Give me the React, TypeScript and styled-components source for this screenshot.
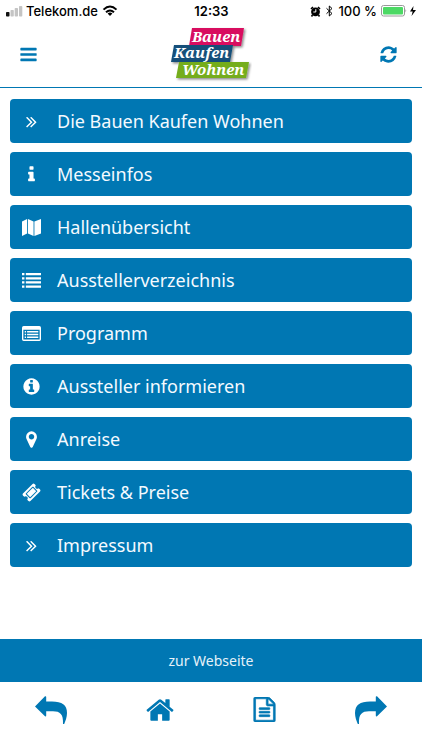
import React from "react";
import styled, { createGlobalStyle } from "styled-components";

const BLUE = "#0077b3";

const GlobalStyle = createGlobalStyle`
  *, *::before, *::after { box-sizing: border-box; }
  body { margin: 0; background: #fff; font-family: "Noto Sans", "Open Sans", sans-serif; }
`;

const Page = styled.div`
  display: flex;
  flex-direction: column;
  min-height: 100vh;
`;

const StatusBar = styled.div`
  display: grid;
  grid-template-columns: 1fr auto 1fr;
  align-items: center;
  height: 22px;
  padding: 0 5px 0 6px;
  font: 500 13px/20px Inter, sans-serif;
  color: #000;
`;

const StatusGroup = styled.div<{ $end?: boolean }>`
  display: flex;
  align-items: center;
  justify-content: ${(p) => (p.$end ? "flex-end" : "flex-start")};
  gap: ${(p) => (p.$end ? "4px" : "3px")};
  white-space: nowrap;
`;

const Clock = styled.time`
  font-weight: 600;
`;

const Header = styled.header`
  display: grid;
  grid-template-columns: 1fr auto 1fr;
  align-items: center;
  height: 66px;
  padding: 0 16px;
  border-bottom: 1px solid ${BLUE};
`;

const IconButton = styled.button<{ $end?: boolean }>`
  display: flex;
  justify-self: ${(p) => (p.$end ? "end" : "start")};
  padding: ${(p) => (p.$end ? "0 8px" : "0 3px")};
  border: 0;
  background: none;
  color: ${BLUE};
  cursor: pointer;
`;

const Logo = styled.svg`
  display: block;
  font: italic 700 15px "Noto Serif", "Liberation Serif", serif;
`;

const Menu = styled.nav`
  display: flex;
  flex: 1;
  flex-direction: column;
  gap: 9px;
  padding: 11px 10px;
`;

const MenuLink = styled.a`
  display: flex;
  align-items: center;
  gap: 16px;
  height: 44px;
  padding: 0 11px;
  border-radius: 4px;
  background: ${BLUE};
  color: #f4faff;
  font-size: 18px;
  line-height: 24px;
  text-decoration: none;
`;

const MenuIcon = styled.span`
  display: flex;
  justify-content: center;
  width: 20px;
  color: #fff;
`;

const WebsiteLink = styled.a`
  display: flex;
  align-items: center;
  justify-content: center;
  height: 43px;
  background: ${BLUE};
  color: #e6f2f9;
  font-size: 14px;
  line-height: 20px;
  text-decoration: none;
`;

const TabBar = styled.nav`
  display: flex;
  justify-content: space-between;
  height: 68px;
  padding: 0 35px 13px;
`;

const TabButton = styled.button`
  display: flex;
  align-items: center;
  padding: 0;
  border: 0;
  background: none;
  color: ${BLUE};
  cursor: pointer;
`;

const ICONS = {
  bars: "M1664 1344v128q0 26-19 45t-45 19h-1408q-26 0-45-19t-19-45v-128q0-26 19-45t45-19h1408q26 0 45 19t19 45zm0-512v128q0 26-19 45t-45 19h-1408q-26 0-45-19t-19-45v-128q0-26 19-45t45-19h1408q26 0 45 19t19 45zm0-512v128q0 26-19 45t-45 19h-1408q-26 0-45-19t-19-45v-128q0-26 19-45t45-19h1408q26 0 45 19t19 45z",
  refresh:
    "M1639 1056q0 5-1 7-64 268-268 434.5t-478 166.5q-146 0-282.5-55t-243.5-157l-129 129q-19 19-45 19t-45-19-19-45v-448q0-26 19-45t45-19h448q26 0 45 19t19 45-19 45l-137 137q71 66 161 102t187 36q134 0 250-65t186-179q11-17 53-117 8-23 30-23h192q13 0 22.5 9.5t9.5 22.5zm25-800v448q0 26-19 45t-45 19h-448q-26 0-45-19t-19-45 19-45l138-138q-148-137-349-137-134 0-250 65t-186 179q-11 17-53 117-8 23-30 23h-199q-13 0-22.5-9.5t-9.5-22.5v-7q65-268 270-434.5t480-166.5q146 0 284 55.5t245 156.5l130-129q19-19 45-19t45 19 19 45z",
  angles:
    "M979 960q0 13-10 23l-466 466q-10 10-23 10t-23-10l-50-50q-10-10-10-23t10-23l393-393-393-393q-10-10-10-23t10-23l50-50q10-10 23-10t23 10l466 466q10 10 10 23zm384 0q0 13-10 23l-466 466q-10 10-23 10t-23-10l-50-50q-10-10-10-23t10-23l393-393-393-393q-10-10-10-23t10-23l50-50q10-10 23-10t23 10l466 466q10 10 10 23z",
  info: "M1216 1344v128q0 26-19 45t-45 19h-512q-26 0-45-19t-19-45v-128q0-26 19-45t45-19h64v-384h-64q-26 0-45-19t-19-45v-128q0-26 19-45t45-19h384q26 0 45 19t19 45v576h64q26 0 45 19t19 45zm-128-1152v192q0 26-19 45t-45 19h-256q-26 0-45-19t-19-45v-192q0-26 19-45t45-19h256q26 0 45 19t19 45z",
  map: "M0 330L480 90V1460L0 1700ZM560 90L1090 330V1700L560 1460ZM1170 330L1792 90V1460L1170 1700Z",
  list: "M0 190h230v220H0zM360 190h1432v220H360zM0 580h230v220H0zM360 580h1432v220H360zM0 970h230v220H0zM360 970h1432v220H360zM0 1360h230v220H0zM360 1360h1432v220H360z",
  listAlt:
    "M160 192H1632Q1792 192 1792 352V1440Q1792 1600 1632 1600H160Q0 1600 0 1440V352Q0 192 160 192ZM128 544V1440Q128 1472 160 1472H1632Q1664 1472 1664 1440V544ZM256 670h128v128H256zM480 670h1056v128H480zM256 926h128v128H256zM480 926h1056v128H480zM256 1182h128v128H256zM480 1182h1056v128H480z",
  infoCircle:
    "M1152 1376v-160q0-14-9-23t-23-9h-96v-512q0-14-9-23t-23-9h-320q-14 0-23 9t-9 23v160q0 14 9 23t23 9h96v320h-96q-14 0-23 9t-9 23v160q0 14 9 23t23 9h448q14 0 23-9t9-23zm-128-896v-160q0-14-9-23t-23-9h-192q-14 0-23 9t-9 23v160q0 14 9 23t23 9h192q14 0 23-9t9-23zm640 416q0 209-103 385.5t-279.5 279.5-385.5 103-385.5-103-279.5-279.5-103-385.5 103-385.5 279.5-279.5 385.5-103 385.5 103 279.5 279.5 103 385.5z",
  marker:
    "M1152 640q0-106-75-181t-181-75-181 75-75 181 75 181 181 75 181-75 75-181zm256 0q0 109-33 179l-364 774q-16 33-47.5 52t-67.5 19-67.5-19-46.5-52l-365-774q-33-70-33-179 0-212 150-362t362-150 362 150 150 362z",
  ticket:
    "M1024 452l316 316-572 572-316-316zm-211 979l618-618q19-19 19-45t-19-45l-362-362q-18-18-45-18t-45 18l-618 618q-19 19-19 45t19 45l362 362q18 18 45 18t45-18zm889-637l-907 908q-37 37-90.500 37t-90.500-37l-126-126q56-56 56-136t-56-136-136-56-136 56l-125-126q-37-37-37-90.500t37-90.500l907-906q37-37 90.500-37t90.500 37l125 125q-56 56-56 136t56 136 136 56 136-56l126 125q37 37 37 90.500t-37 90.500z",
  home: "M1472 992v480q0 26-19 45t-45 19h-384v-384h-256v384h-384q-26 0-45-19t-19-45v-480q0-1 .5-3t.5-3l575-474 575 474q1 2 1 6zm223-69l-62 74q-8 9-21 11h-3q-13 0-21-7l-692-577-692 577q-12 8-24 7-13-2-21-11l-62-74q-8-10-7-23.5t11-21.500l719-599q32-26 76-26t76 26l244 204v-195q0-14 9-23t23-9h192q14 0 23 9t9 23v408l219 182q10 8 11 21.500t-7 23.500z",
  file: "M1596 380q28 28 48 76t20 88v1152q0 40-28 68t-68 28h-1344q-40 0-68-28t-28-68v-1600q0-40 28-68t68-28h896q40 0 88 20t76 48zm-444-244v376h376q-10-29-22-41l-313-313q-12-12-41-22zm384 1528v-1024h-416q-40 0-68-28t-28-68v-416h-768v1536h1280zm-1024-864q0-14 9-23t23-9h704q14 0 23 9t9 23v64q0 14-9 23t-23 9h-704q-14 0-23-9t-9-23v-64zm736 224q14 0 23 9t9 23v64q0 14-9 23t-23 9h-704q-14 0-23-9t-9-23v-64q0-14 9-23t23-9h704zm0 256q14 0 23 9t9 23v64q0 14-9 23t-23 9h-704q-14 0-23-9t-9-23v-64q0-14 9-23t23-9h704z",
};

type IconName = keyof typeof ICONS;

function Icon({ name, size, bold }: { name: IconName; size: number; bold?: boolean }) {
  return (
    <svg width={size} height={size} viewBox="0 0 1792 1792" fill="currentColor" aria-hidden="true">
      <path
        d={ICONS[name]}
        fillRule={name === "listAlt" ? "evenodd" : "nonzero"}
        stroke={bold ? "currentColor" : "none"}
        strokeWidth="50"
      />
    </svg>
  );
}

function CurvedArrow({ forward }: { forward?: boolean }) {
  return (
    <svg width="32" height="28" viewBox="0 0 32 28" fill="currentColor" aria-hidden="true">
      <path
        transform={forward ? "translate(32 0) scale(-1 1)" : undefined}
        d="M0 10.500L10 0.300Q11.200 0 11.200 1V5.500H17C27 5.500 32 9 32 17C32 21 30.500 25 29.200 28H28C28.500 18 25 15.200 18 15.200H11.200V19.500Q11.200 20.700 10 20.300Z"
      />
    </svg>
  );
}

const items: { label: string; icon: IconName; size: number }[] = [
  { label: "Die Bauen Kaufen Wohnen", icon: "angles", size: 19 },
  { label: "Messeinfos", icon: "info", size: 19 },
  { label: "Hallenübersicht", icon: "map", size: 19 },
  { label: "Ausstellerverzeichnis", icon: "list", size: 19 },
  { label: "Programm", icon: "listAlt", size: 19 },
  { label: "Aussteller informieren", icon: "infoCircle", size: 19 },
  { label: "Anreise", icon: "marker", size: 19 },
  { label: "Tickets & Preise", icon: "ticket", size: 19 },
  { label: "Impressum", icon: "angles", size: 19 },
];

export default function App() {
  return (
    <Page>
      <GlobalStyle />
      <StatusBar>
        <StatusGroup>
          <svg width="17" height="11" viewBox="0 0 17 11" aria-hidden="true">
            <rect y="6" width="3.500" height="4.500" rx="0.800" fill="#111" />
            <rect x="4.500" y="4" width="3.300" height="6.500" rx="0.800" fill="#c4c4c4" />
            <rect x="8.700" y="2" width="3.300" height="8.500" rx="0.800" fill="#c4c4c4" />
            <rect x="13" width="3.300" height="10.500" rx="0.800" fill="#c4c4c4" />
          </svg>
          Telekom.de
          <svg width="18" height="12" viewBox="0 0 18 12" fill="none" stroke="#000" strokeWidth="2" aria-hidden="true">
            <path d="M2.500 4.600Q9-1.600 15.500 4.600M5 7.300Q9 3.600 13 7.300" />
            <path d="M6.600 8.600Q9 6.600 11.400 8.600L9 11Z" fill="#000" stroke="none" />
          </svg>
        </StatusGroup>
        <Clock>12:33</Clock>
        <StatusGroup $end>
          <svg width="11" height="11" viewBox="0 0 11 11" aria-hidden="true">
            <path d="M1 3L3 1M10 3L8 1M2.500 9L1.500 10.500M8.500 9L9.500 10.500" stroke="#000" strokeWidth="1.600" />
            <circle cx="5.500" cy="5.800" r="4.400" />
            <path d="M5.800 3.200V6H3.300" fill="none" stroke="#fff" />
          </svg>
          <svg width="9" height="12" viewBox="0 0 9 12" fill="none" stroke="#000" aria-hidden="true">
            <path d="M1.500 3.300L7 8.500L4.300 11V1L7 3.500L1.500 8.700" />
          </svg>
          <span>100 %</span>
          <svg width="36" height="12" viewBox="0 0 36 12" aria-hidden="true">
            <rect x="0.500" y="0.500" width="23" height="10.500" rx="2" fill="#fff" stroke="#999" />
            <rect x="2" y="2" width="20" height="7.500" rx="1" fill="#4cd964" />
            <path d="M24.500 4Q26 5.700 24.500 7.500Z" fill="#888" />
            <path d="M32.500 1L29 6.500H31.700L30.500 11L35 4.900H32Z" />
          </svg>
        </StatusGroup>
      </StatusBar>
      <Header>
        <IconButton aria-label="Menü">
          <Icon name="bars" size={19} />
        </IconButton>
        <Logo width="82" height="56" viewBox="0 0 82 56" role="img" aria-label="Bauen Kaufen Wohnen">
          <defs>
            <filter id="shadow" x="-10%" y="-10%" width="125%" height="130%">
              <feDropShadow dx="1.500" dy="1.500" stdDeviation="1" floodColor="#000" floodOpacity="0.450" />
            </filter>
          </defs>
          <g filter="url(#shadow)">
            <path d="M22 1H74L71 19H19Z" fill="#d8115f" />
            <path d="M9 35H79L76 51H6Z" fill="#75ad1c" />
            <path d="M4 18H63L60 35H1Z" fill="#12507a" />
          </g>
          <g fill="#fff">
            <text x="22" y="15">Bauen</text>
            <text x="4" y="31">Kaufen</text>
            <text x="12" y="48">Wohnen</text>
          </g>
        </Logo>
        <IconButton $end aria-label="Aktualisieren">
          <Icon name="refresh" size={19} />
        </IconButton>
      </Header>
      <Menu aria-label="Hauptmenü">
        {items.map((item) => (
          <MenuLink href="#" key={item.label}>
            <MenuIcon>
              <Icon name={item.icon} size={item.size} />
            </MenuIcon>
            {item.label}
          </MenuLink>
        ))}
      </Menu>
      <WebsiteLink href="#">zur Webseite</WebsiteLink>
      <TabBar aria-label="Navigation">
        <TabButton aria-label="Zurück">
          <CurvedArrow />
        </TabButton>
        <TabButton aria-label="Startseite">
          <Icon name="home" size={30} />
        </TabButton>
        <TabButton aria-label="Notizen">
          <Icon name="file" size={25} bold />
        </TabButton>
        <TabButton aria-label="Vorwärts">
          <CurvedArrow forward />
        </TabButton>
      </TabBar>
    </Page>
  );
}
